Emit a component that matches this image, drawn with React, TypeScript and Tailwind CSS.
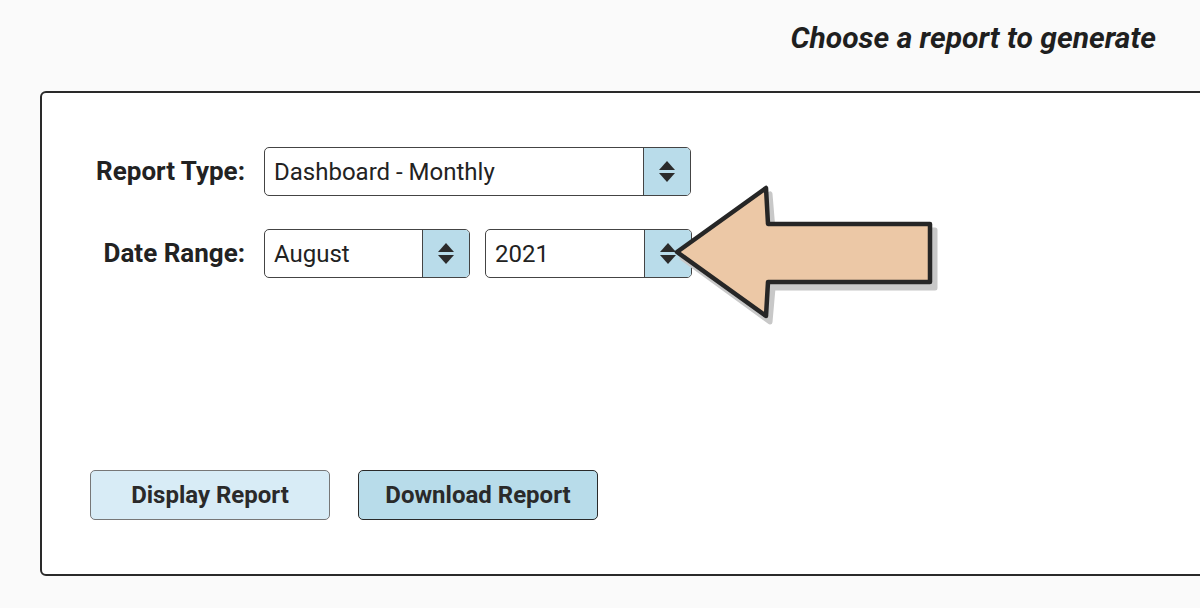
import React from "react";

function Spinner() {
  return (
    <div className="w-[47px] self-stretch bg-[#b9dcea] border-l-[1.5px] border-[#444] flex flex-col items-center justify-center gap-[3px]">
      <svg width="16" height="9" viewBox="0 0 16 9"><path d="M8 0 L16 9 L0 9 Z" fill="#2b2b2b" /></svg>
      <svg width="16" height="9" viewBox="0 0 16 9"><path d="M0 0 L16 0 L8 9 Z" fill="#2b2b2b" /></svg>
    </div>
  );
}

function Select({ value, width }: { value: string; width: string }) {
  return (
    <div className={`${width} h-[49px] flex items-center bg-white border-[1.5px] border-[#444] rounded-[5px] overflow-hidden`}>
      <div className="flex-1 pl-[9px] text-[24px] text-[#222] leading-none">{value}</div>
      <Spinner />
    </div>
  );
}

export default function App() {
  return (
    <div
      className="relative w-[1200px] h-[608px] bg-[#fafafa] overflow-hidden"
      style={{ fontFamily: "Roboto, 'Liberation Sans', sans-serif" }}
    >
      <div className="h-[91px] flex justify-end pr-[44px] pt-[19px]">
        <div className="text-[30px] font-bold italic text-[#1f1f1f] leading-[38px]">Choose a report to generate</div>
      </div>
      <div className="ml-[40px] w-[1200px] h-[485px] bg-white border-2 border-[#2a2a2a] rounded-tl-[6px] rounded-bl-[6px] flex flex-col">
        <div className="pt-[54px] flex flex-col gap-[33px]">
          <div className="flex items-center">
            <div className="w-[203px] text-right text-[26px] font-bold text-[#222]">Report Type:</div>
            <div className="ml-[19px]">
              <Select value="Dashboard - Monthly" width="w-[427px]" />
            </div>
          </div>
          <div className="flex items-center">
            <div className="w-[203px] text-right text-[26px] font-bold text-[#222]">Date Range:</div>
            <div className="ml-[19px] flex gap-[15px]">
              <Select value="August" width="w-[206px]" />
              <Select value="2021" width="w-[207px]" />
            </div>
          </div>
        </div>
        <div className="mt-[192px] ml-[48px] flex gap-[28px]">
          <button className="w-[240px] h-[50px] rounded-[5px] bg-[#d8ecf6] border-[1.5px] border-[#777] text-[24px] font-bold text-[#2a2a2a]">
            Display Report
          </button>
          <button className="w-[240px] h-[50px] rounded-[5px] bg-[#b8dcea] border-[1.5px] border-[#2a2a2a] text-[24px] font-bold text-[#2a2a2a]">
            Download Report
          </button>
        </div>
      </div>
      <svg
        className="absolute left-0 top-0 pointer-events-none"
        width="1200"
        height="608"
        viewBox="0 0 1200 608"
      >
        <path
          d="M682 258 L770 194 L773 230 L935 230 L935 288 L773 288 L770 322 Z"
          fill="#c8c8c8"
          stroke="#c8c8c8"
          strokeWidth="5"
          strokeLinejoin="round"
        />
        <path
          d="M677 252 L766 188 L768 224 L930 224 L930 282 L768 282 L766 316 Z"
          fill="#ecc8a6"
          stroke="#262626"
          strokeWidth="4.5"
          strokeLinejoin="round"
        />
      </svg>
    </div>
  );
}
